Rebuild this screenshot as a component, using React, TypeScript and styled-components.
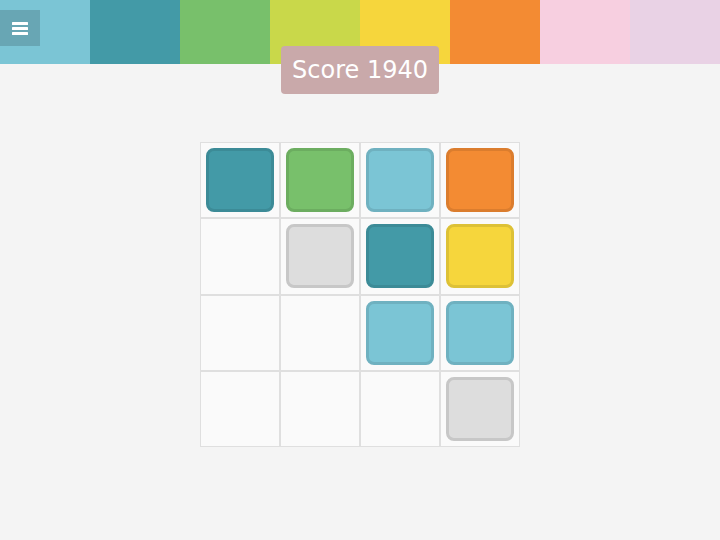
import React from "react";
import styled, { createGlobalStyle } from "styled-components";

const Global = createGlobalStyle`
  html, body { margin: 0; padding: 0; background: #f4f4f4; }
  body { font-family: "DejaVu Sans", "Liberation Sans", sans-serif; }
`;

const Page = styled.div`
  width: 720px;
  height: 540px;
  position: relative;
  background: #f4f4f4;
  overflow: hidden;
`;

const ColorBar = styled.div`
  display: flex;
  height: 64px;
`;

const Swatch = styled.div<{ $c: string }>`
  flex: 1;
  background: ${(p) => p.$c};
`;

const MenuButton = styled.div`
  position: absolute;
  left: 0;
  top: 10px;
  width: 40px;
  height: 36px;
  background: #68a6b4;
  display: flex;
  align-items: center;
  justify-content: center;
`;

const Score = styled.div`
  position: absolute;
  left: 281px;
  top: 46px;
  width: 158px;
  height: 48px;
  border-radius: 4px;
  background: #c9a9aa;
  color: #ffffff;
  font-size: 24px;
  display: flex;
  align-items: center;
  justify-content: center;
`;

const Board = styled.div`
  display: grid;
  grid-template-columns: repeat(4, 80px);
  grid-template-rows: repeat(4, 76.25px);
  width: 320px;
  margin: 78px auto 0;
`;

const Cell = styled.div`
  box-sizing: border-box;
  border: 1px solid #dfdfdf;
  background: #fafafa;
  padding: 5px;
`;

const Tile = styled.div<{ $bg: string; $bd: string }>`
  box-sizing: border-box;
  width: 68px;
  height: 64px;
  border-radius: 8px;
  background: ${(p) => p.$bg};
  border: 3px solid ${(p) => p.$bd};
`;

const colors = ["#7bc5d5", "#439aa7", "#78c06b", "#c9d84a", "#f6d63c", "#f38b33", "#f7cfe0", "#e9d2e5"];

type T = { bg: string; bd: string } | null;
const teal = { bg: "#439aa7", bd: "#3c8b97" };
const green = { bg: "#78c06b", bd: "#6cad60" };
const light = { bg: "#7bc5d5", bd: "#6fb1c0" };
const orange = { bg: "#f38b33", bd: "#db7d2e" };
const gray = { bg: "#dddddd", bd: "#c7c7c7" };
const yellow = { bg: "#f6d63c", bd: "#ddc136" };

const grid: T[] = [
  teal, green, light, orange,
  null, gray, teal, yellow,
  null, null, light, light,
  null, null, null, gray,
];

export default function App() {
  return (
    <Page>
      <Global />
      <ColorBar>
        {colors.map((c) => (
          <Swatch key={c} $c={c} />
        ))}
      </ColorBar>
      <MenuButton>
        <svg width="16" height="14" viewBox="0 0 16 14">
          <rect x="0" y="1" width="16" height="3" rx="0.5" fill="#fff" />
          <rect x="0" y="6" width="16" height="3" rx="0.5" fill="#fff" />
          <rect x="0" y="11" width="16" height="3" rx="0.5" fill="#fff" />
        </svg>
      </MenuButton>
      <Score>Score 1940</Score>
      <Board>
        {grid.map((t, i) => (
          <Cell key={i}>{t && <Tile $bg={t.bg} $bd={t.bd} />}</Cell>
        ))}
      </Board>
    </Page>
  );
}
